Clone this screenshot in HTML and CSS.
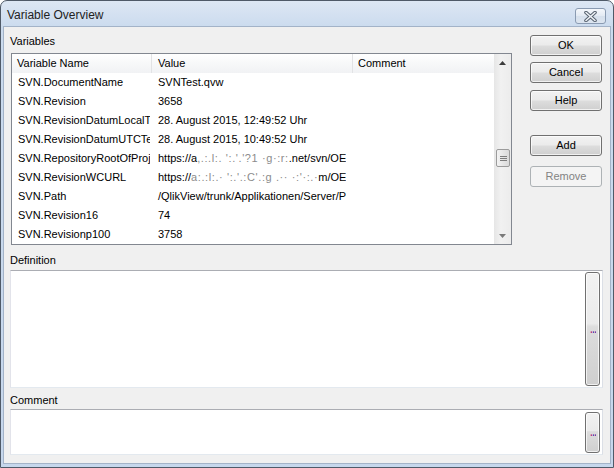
FILE: index.html
```html
<!DOCTYPE html>
<html>
<head>
<meta charset="utf-8">
<title>Variable Overview</title>
<link rel="stylesheet" href="styles.css">
</head>
<body>
<div class="window">
  <div class="titlebar">
    <span class="title">Variable Overview</span>
    <button class="close" type="button">
      <svg width="13" height="11" viewBox="0 0 13 11">
        <path d="M2 1.5 L11 9.5 M11 1.5 L2 9.5" stroke="#56616e" stroke-width="3.6" stroke-linecap="round"/>
        <path d="M2 1.5 L11 9.5 M11 1.5 L2 9.5" stroke="#eef2f7" stroke-width="1.6" stroke-linecap="round"/>
      </svg>
    </button>
  </div>
  <div class="client">
    <div class="top">
      <div class="vars">
        <div class="label">Variables</div>
        <div class="listbox">
          <div class="list">
            <div class="row head">
              <div class="c1">Variable Name</div>
              <div class="c2">Value</div>
              <div class="c3">Comment</div>
            </div>
            <div class="row"><div class="c1">SVN.DocumentName</div><div class="c2">SVNTest.qvw</div><div class="c3"></div></div>
            <div class="row"><div class="c1">SVN.Revision</div><div class="c2">3658</div><div class="c3"></div></div>
            <div class="row"><div class="c1">SVN.RevisionDatumLocalText</div><div class="c2">28. August 2015, 12:49:52 Uhr</div><div class="c3"></div></div>
            <div class="row"><div class="c1">SVN.RevisionDatumUTCText</div><div class="c2">28. August 2015, 10:49:52 Uhr</div><div class="c3"></div></div>
            <div class="row"><div class="c1">SVN.RepositoryRootOfProject</div><div class="c2">https://a<span class="blur">,.:.l:.  ':.'.'?1 ·g·:r:</span>.net/svn/OEBB</div><div class="c3"></div></div>
            <div class="row"><div class="c1">SVN.RevisionWCURL</div><div class="c2">https://<span class="blur">a:.:l:.·  ':.'.:C'.:g  .·· ·:'·:.·</span>m/OEBB</div><div class="c3"></div></div>
            <div class="row"><div class="c1">SVN.Path</div><div class="c2">/QlikView/trunk/Applikationen/Server/Produktion</div><div class="c3"></div></div>
            <div class="row"><div class="c1">SVN.Revision16</div><div class="c2">74</div><div class="c3"></div></div>
            <div class="row"><div class="c1">SVN.Revisionp100</div><div class="c2">3758</div><div class="c3"></div></div>
          </div>
          <div class="vscroll">
            <div class="arrow">
              <svg width="7" height="4" viewBox="0 0 7 4"><polygon points="3.5,0 7,4 0,4" fill="#3c3c3c"/></svg>
            </div>
            <div class="track">
              <div class="thumb">
                <svg width="7" height="7" viewBox="0 0 7 7">
                  <path d="M0 1.5 H7 M0 3.5 H7 M0 5.5 H7" stroke="#7d7d7d" stroke-width="1"/>
                </svg>
              </div>
            </div>
            <div class="arrow">
              <svg width="7" height="4" viewBox="0 0 7 4"><polygon points="0,0 7,0 3.5,4" fill="#7a7a7a"/></svg>
            </div>
          </div>
        </div>
      </div>
      <div class="buttons">
        <button class="btn" type="button">OK</button>
        <button class="btn cancel" type="button">Cancel</button>
        <button class="btn help" type="button">Help</button>
        <button class="btn add" type="button">Add</button>
        <button class="btn remove" type="button" disabled>Remove</button>
      </div>
    </div>
    <div class="label def-label">Definition</div>
    <div class="textbox big"><button class="dots" type="button"><span class="d1">.</span><span class="d2">.</span><span class="d3">.</span></button></div>
    <div class="label com-label">Comment</div>
    <div class="textbox small"><button class="dots" type="button"><span class="d1">.</span><span class="d2">.</span><span class="d3">.</span></button></div>
  </div>
</div>
</body>
</html>
```
FILE: styles.css
```css
html, body {
  margin: 0;
  padding: 0;
  background: #ffffff;
}

body {
  font-family: "Liberation Sans", Arial, sans-serif;
  font-size: 11px;
  color: #000;
}

.window {
  width: 614px;
  height: 468px;
  box-sizing: border-box;
  border: 1px solid #4f5a68;
  border-radius: 7px 7px 0 0;
  background: linear-gradient(#dde7f4 0px, #cbdbee 26px, #c6d7ec 100%);
  padding: 0 2px 3px 2px;
  display: flex;
  flex-direction: column;
}

.titlebar {
  height: 25px;
  display: flex;
  align-items: flex-start;
  justify-content: space-between;
  flex: none;
}

.title {
  font-family: "Liberation Sans", Arial, sans-serif;
  font-size: 12px;
  line-height: 14px;
  color: #222;
  margin: 7px 0 0 4px;
}

.close {
  width: 31px;
  height: 16px;
  margin: 7px 5px 0 0;
  padding: 0;
  border: 1px solid #8a9bb2;
  border-radius: 3px;
  background: linear-gradient(#f4f7fb, #e3eaf3 50%, #d6e0ec 51%, #dce5f0);
  display: flex;
  align-items: center;
  justify-content: center;
}

.client {
  flex: 1;
  border: 1px solid #a3b3c8;
  background: #f0f0f0;
  padding: 8px 7px 0 6px;
  display: flex;
  flex-direction: column;
}

.label {
  line-height: 13px;
  height: 13px;
  color: #000;
  white-space: nowrap;
}

.top {
  display: flex;
  justify-content: space-between;
}

.vars {
  width: 502px;
}

.vars .label {
  margin-bottom: 5px;
}

.listbox {
  margin-left: 1px;
  width: 501px;
  height: 192px;
  box-sizing: border-box;
  border: 1px solid #828790;
  background: #fff;
  display: flex;
}

.list {
  flex: 1;
  overflow: hidden;
}

.row {
  display: flex;
  height: 19px;
  line-height: 19px;
  white-space: nowrap;
}

.row > div {
  overflow: hidden;
  box-sizing: border-box;
  flex: none;
}

.c1 {
  width: 138px;
  margin-right: 2px;
  padding: 0 0 0 6px;
}

.c2 {
  width: 194px;
  margin-right: 7px;
  padding: 0 0 0 6px;
}

.row > .c3 {
  flex: 1;
  padding: 0 4px 0 5px;
}

.row.head {
  background: linear-gradient(#ffffff, #f7f8f9 50%, #f1f2f4);
}

.row.head .c1 {
  width: 140px;
  margin-right: 0;
  padding-left: 5px;
  border-right: 1px solid #e2e3e5;
}

.row.head .c2 {
  width: 201px;
  margin-right: 0;
  border-right: 1px solid #e2e3e5;
}

.blur {
  color: #8c8c8c;
  letter-spacing: 0.6px;
}

.vscroll {
  width: 17px;
  flex: none;
  background: linear-gradient(90deg, #e6e6e6, #f1f1f1 40%, #ececec);
  display: flex;
  flex-direction: column;
}

.arrow {
  height: 17px;
  display: flex;
  align-items: center;
  justify-content: center;
  flex: none;
}

.arrow svg {
  display: block;
}

.track {
  flex: 1;
}

.thumb {
  margin: 78px 1px 0 2px;
  height: 18px;
  box-sizing: border-box;
  border: 1px solid #9b9b9b;
  border-radius: 2px;
  background: linear-gradient(90deg, #f3f3f3, #e6e6e6 50%, #dadada);
  display: flex;
  align-items: center;
  justify-content: center;
}

.thumb svg {
  display: block;
}

.buttons {
  width: 72px;
  margin-right: 1px;
  display: flex;
  flex-direction: column;
}

.btn {
  width: 72px;
  height: 21px;
  box-sizing: border-box;
  padding: 0;
  border: 1px solid #707070;
  border-radius: 3px;
  background: linear-gradient(#f2f2f2 0%, #ebebeb 48%, #dddddd 52%, #cfcfcf 100%);
  box-shadow: inset 0 0 0 1px rgba(255, 255, 255, 0.7);
  font-family: "Liberation Sans", Arial, sans-serif;
  font-size: 11px;
  line-height: 19px;
  color: #000;
  text-align: center;
}

.cancel { margin-top: 6px; }
.help { margin-top: 7px; }
.add { margin-top: 24px; }
.remove {
  margin-top: 10px;
  border-color: #adb2b5;
  background: #f4f4f4;
  box-shadow: none;
  color: #838383;
}

.def-label {
  margin-top: 9px;
  margin-bottom: 3px;
}

.com-label {
  margin-top: 6px;
  margin-bottom: 2px;
}

.textbox {
  box-sizing: border-box;
  border: 1px solid;
  border-color: #abadb3 #dbdfe6 #e3e9ef #e2e3ea;
  background: #fff;
  display: flex;
  justify-content: flex-end;
  padding: 1px 2px 1px 0;
}

.textbox.big { height: 118px; }
.textbox.small { height: 46px; padding-top: 2px; }

.dots {
  width: 15px;
  box-sizing: border-box;
  padding: 0 0 0 1px;
  border: 1px solid #707070;
  border-radius: 3px;
  background: linear-gradient(#f2f2f2 0%, #ebebeb 45%, #dddddd 48%, #cfcfcf 100%);
  box-shadow: inset 0 0 0 1px rgba(255, 255, 255, 0.7);
  display: flex;
  align-items: center;
  justify-content: center;
  font-family: "Liberation Sans", Arial, sans-serif;
  font-size: 11px;
  line-height: 11px;
}

.dots span {
  display: block;
  width: 2px;
  overflow: hidden;
  font-weight: bold;
}

.d1 { color: #b03a8c; }
.d2 { color: #3b4bb8; }
.d3 { color: #6b3aa8; }
```
